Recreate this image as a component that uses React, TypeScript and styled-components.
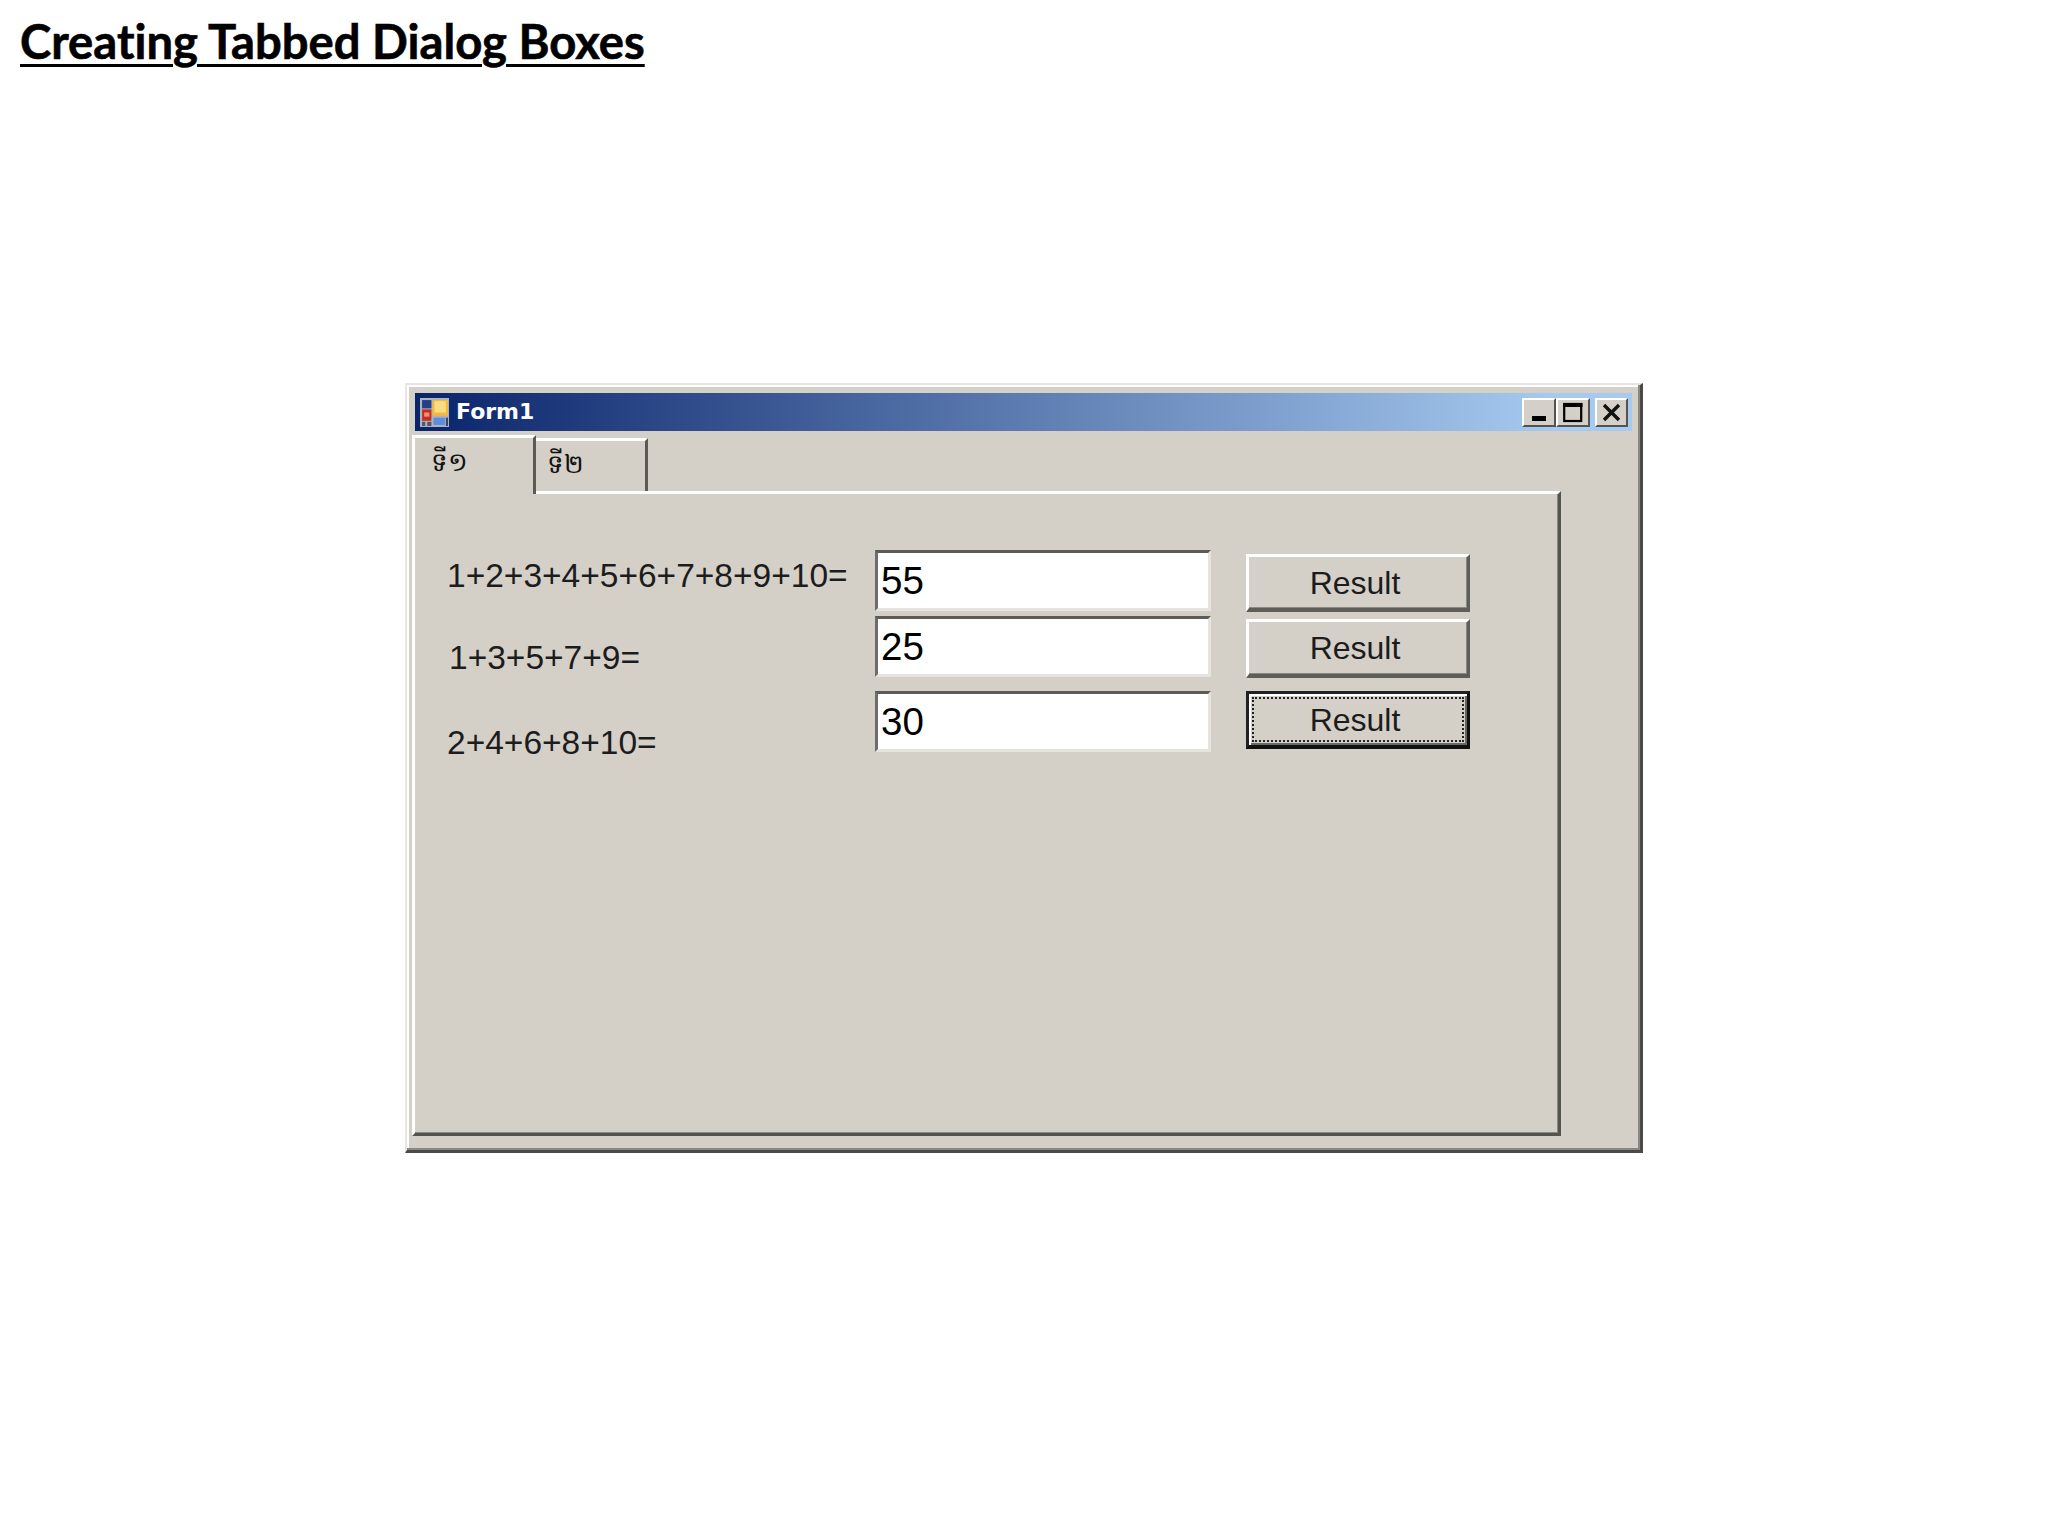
import React from "react";
import styled, { createGlobalStyle } from "styled-components";

const Global = createGlobalStyle`
  html, body { margin: 0; padding: 0; background: #fff; }
  body { width: 2048px; height: 1536px; overflow: hidden; font-family: "Liberation Sans", Arial, sans-serif; }
`;

const Page = styled.div`
  width: 2048px;
  height: 1536px;
  display: flex;
  flex-direction: column;
  background: #fff;
`;

const Heading = styled.h1`
  margin: 0;
  height: 383px;
  box-sizing: border-box;
  padding: 14px 0 0 20px;
  font: 700 47.2px/54px "Lato", "Open Sans", sans-serif;
  font-variant-ligatures: none;
  -webkit-text-stroke: 0.6px #000;
  color: #000;
  text-decoration: underline;
  text-decoration-thickness: 3px;
  text-underline-offset: 5px;
  text-decoration-skip-ink: auto;
`;

const Window = styled.div`
  margin-left: 405px;
  width: 1238px;
  height: 770px;
  box-sizing: border-box;
  padding: 8px 8px 0 8px;
  background: #d4d0c8;
  border-top: 2px solid #e6e4de;
  border-left: 2px solid #e8e6e1;
  border-right: 3px solid #4a4a46;
  border-bottom: 3px solid #4a4a46;
  box-shadow: inset -2px -2px 0 #8a8880, inset 2px 2px 0 #fff;
  display: flex;
  flex-direction: column;
`;

const TitleBar = styled.div`
  height: 38px;
  flex: none;
  padding: 0 4px 0 5px;
  display: flex;
  align-items: center;
  background: linear-gradient(90deg, #0a246a 0%, #a6caf0 94%);
`;

const TitleText = styled.span`
  margin-left: 7px;
  flex: 1;
  color: #fff;
  font: 700 22px/1 "DejaVu Sans", sans-serif;
`;

const CaptionButton = styled.button<{ $gap?: number; $width: number }>`
  width: ${(p) => p.$width}px;
  height: 29px;
  margin-left: ${(p) => p.$gap ?? 0}px;
  padding: 0;
  display: flex;
  align-items: center;
  justify-content: center;
  background: #d4d0c8;
  border: none;
  border-top: 2px solid #fff;
  border-left: 2px solid #fff;
  border-right: 2px solid #55534e;
  border-bottom: 2px solid #55534e;
`;

const TabStrip = styled.div`
  display: flex;
  align-items: flex-end;
  height: 60px;
  margin-left: -3px;
  flex: none;
`;

const Tab = styled.div<{ $active?: boolean }>`
  box-sizing: border-box;
  width: ${(p) => (p.$active ? 124 : 112)}px;
  height: ${(p) => (p.$active ? 59 : 53)}px;
  margin-bottom: ${(p) => (p.$active ? -3 : 0)}px;
  padding: ${(p) => (p.$active ? "8px 0 0 16px" : "7px 0 0 11px")};
  position: relative;
  z-index: ${(p) => (p.$active ? 1 : 0)};
  background: #d4d0c8;
  border-top: 3px solid #fff;
  border-left: ${(p) => (p.$active ? "3px solid #fff" : "none")};
  border-right: 3px solid #5c5a55;
  font: 400 26px/30px "Noto Sans", "DejaVu Sans", sans-serif;
  color: #111;
`;

const TabPanel = styled.div`
  width: 1149px;
  height: 645px;
  margin-left: -3px;
  flex: none;
  box-sizing: border-box;
  background: #d4d0c8;
  border-top: 3px solid #fff;
  border-left: 3px solid #fff;
  border-right: 3px solid #55534e;
  border-bottom: 3px solid #55534e;
  box-shadow: inset -1px -1px 0 #8a8880;
  padding: 56px 0 0 32px;
  display: flex;
  flex-direction: column;
`;

const Row = styled.div<{ $gapAfter: number }>`
  display: flex;
  align-items: flex-start;
  height: 61px;
  margin-bottom: ${(p) => p.$gapAfter}px;
`;

const Label = styled.div<{ $top: number; $left?: number }>`
  width: ${(p) => 428 - (p.$left ?? 0)}px;
  margin-left: ${(p) => p.$left ?? 0}px;
  margin-top: ${(p) => p.$top}px;
  font: 400 33.5px/40px "Liberation Sans", Arial, sans-serif;
  color: #1c1c1c;
  white-space: nowrap;
`;

const Field = styled.div`
  width: 336px;
  height: 61px;
  flex: none;
  box-sizing: border-box;
  margin-right: 35px;
  padding: 5px 0 0 3px;
  background: #fff;
  border-top: 3px solid #5d5b56;
  border-left: 3px solid #6f6d68;
  border-right: 3px solid #e6e4df;
  border-bottom: 3px solid #e6e4df;
  font: 400 38.5px/46px "Liberation Sans", Arial, sans-serif;
  color: #000;
`;

const ResultButton = styled.button<{ $focused?: boolean; $top: number; $height: number }>`
  width: 224px;
  height: ${(p) => p.$height}px;
  margin-top: ${(p) => p.$top}px;
  flex: none;
  box-sizing: border-box;
  padding: 0;
  background: #d4d0c8;
  font: 400 32px/1 "Liberation Sans", Arial, sans-serif;
  color: #1c1c1c;
  border-top: 3px solid ${(p) => (p.$focused ? "#222" : "#fff")};
  border-left: 3px solid ${(p) => (p.$focused ? "#222" : "#fff")};
  border-right: 3px solid ${(p) => (p.$focused ? "#111" : "#5f5d58")};
  border-bottom: 4px solid ${(p) => (p.$focused ? "#111" : "#5f5d58")};
  box-shadow: ${(p) =>
    p.$focused
      ? "inset 2px 2px 0 #fff, inset -2px -2px 0 #6a6862"
      : "inset -1px -1px 0 #8a8880"};
  display: flex;
  align-items: stretch;
  justify-content: stretch;
`;

const ButtonFace = styled.span<{ $focused?: boolean }>`
  flex: 1;
  margin: ${(p) => (p.$focused ? "5px" : "0")};
  padding-right: 6px;
  display: flex;
  align-items: center;
  justify-content: center;
  outline: ${(p) => (p.$focused ? "2px dotted #222" : "none")};
`;

const FormIcon = () => (
  <svg width="29" height="29" viewBox="0 0 28 28" style={{ flex: "none" }}>
    <rect width="28" height="28" fill="#aeb2ba" />
    <rect x="2" y="2" width="9" height="8" fill="#24408a" />
    <rect x="12" y="2" width="15" height="15" fill="#f2bb3c" />
    <rect x="14" y="3" width="11" height="11" fill="#fbdc80" />
    <rect x="2" y="11" width="9" height="11" fill="#c4301f" />
    <rect x="4" y="14" width="5" height="4" fill="#f09070" />
    <rect x="13" y="19" width="11" height="7" fill="#5a8fe0" />
    <rect x="2" y="23" width="3" height="4" fill="#4d566c" />
    <rect x="7" y="23" width="4" height="4" fill="#4d566c" />
    <rect x="25" y="19" width="2" height="8" fill="#34446a" />
  </svg>
);

const MinGlyph = () => (
  <svg width="26" height="23" viewBox="0 0 26 23">
    <rect x="6" y="15" width="14" height="5" fill="#000" />
  </svg>
);
const MaxGlyph = () => (
  <svg width="26" height="23" viewBox="0 0 26 23">
    <rect x="4.2" y="3" width="17" height="17" fill="none" stroke="#000" strokeWidth="2.2" />
    <rect x="3" y="2" width="19.5" height="4" fill="#000" />
  </svg>
);
const CloseGlyph = () => (
  <svg width="26" height="23" viewBox="0 0 26 23">
    <path d="M5 4 L20 19 M20 4 L5 19" stroke="#111" strokeWidth="3.4" fill="none" />
  </svg>
);

const rows = [
  { label: "1+2+3+4+5+6+7+8+9+10=", value: "55", labelTop: 6, labelLeft: 0, btnTop: 4, btnHeight: 58, gap: 5, focused: false },
  { label: "1+3+5+7+9=", value: "25", labelTop: 22, labelLeft: 2, btnTop: 3, btnHeight: 59, gap: 14, focused: false },
  { label: "2+4+6+8+10=", value: "30", labelTop: 32, labelLeft: 0, btnTop: 0, btnHeight: 58, gap: 0, focused: true },
];

export default function App() {
  return (
    <Page>
      <Global />
      <Heading>Creating Tabbed Dialog Boxes</Heading>
      <Window>
        <TitleBar>
          <FormIcon />
          <TitleText>Form1</TitleText>
          <CaptionButton $width={34}><MinGlyph /></CaptionButton>
          <CaptionButton $width={34}><MaxGlyph /></CaptionButton>
          <CaptionButton $width={33} $gap={5}><CloseGlyph /></CaptionButton>
        </TitleBar>
        <TabStrip>
          <Tab $active>ទី១</Tab>
          <Tab>ទី២</Tab>
        </TabStrip>
        <TabPanel>
          {rows.map((r) => (
            <Row key={r.value} $gapAfter={r.gap}>
              <Label $top={r.labelTop} $left={r.labelLeft}>{r.label}</Label>
              <Field>{r.value}</Field>
              <ResultButton $focused={r.focused} $top={r.btnTop} $height={r.btnHeight}>
                <ButtonFace $focused={r.focused}>Result</ButtonFace>
              </ResultButton>
            </Row>
          ))}
        </TabPanel>
      </Window>
    </Page>
  );
}
